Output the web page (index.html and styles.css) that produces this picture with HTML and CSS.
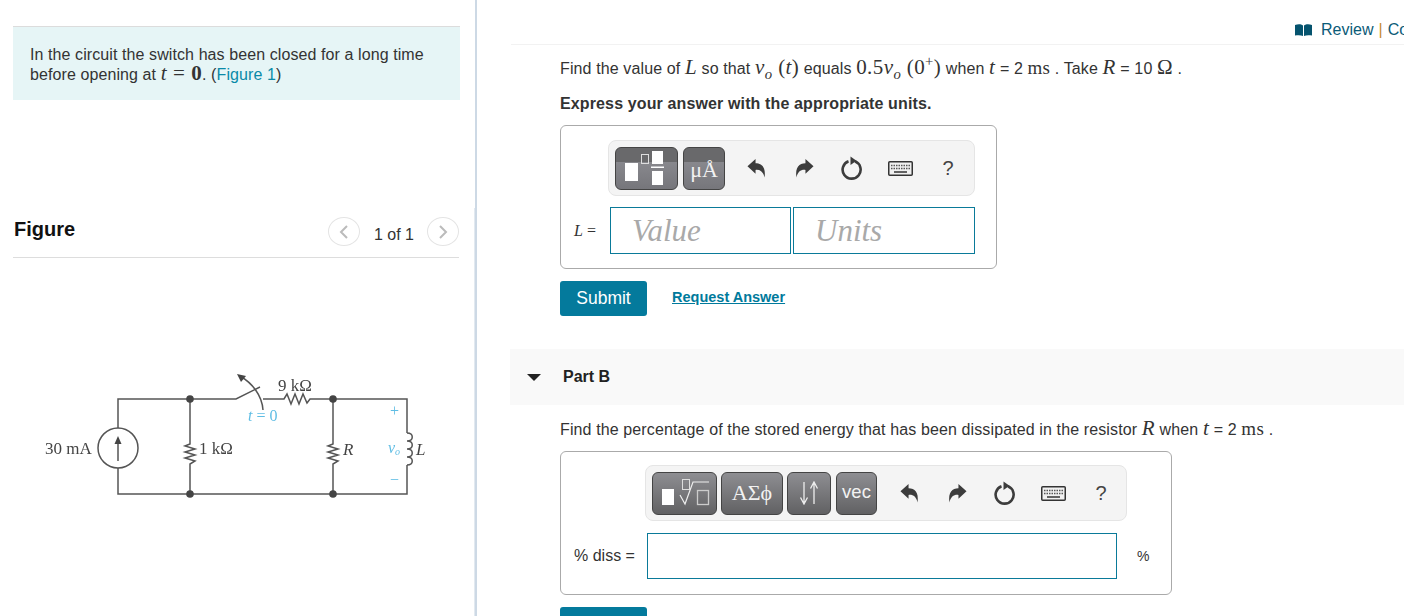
FILE: index.html
```html
<!DOCTYPE html>
<html>
  <head>
    <title>Part A</title>
    <link rel="stylesheet" href="styles.css">
  </head>
  <body>
    <svg class="defs" width="0" height="0">
      <symbol id="undo" viewBox="0 0 20 20">
        <path d="M0.500 7.500 L9 0 V4.500 C15.500 4.500 20 8.500 18.500 19.500 C17 13.500 14 11 9 11.500 V15.500 Z" fill="#3c3c3c"/>
      </symbol>
      <symbol id="redo" viewBox="0 0 20 20">
        <path d="M19.500 7.500 L11 0 V4.500 C4.500 4.500 0 8.500 1.500 19.500 C3 13.500 6 11 11 11.500 V15.500 Z" fill="#3c3c3c"/>
      </symbol>
      <symbol id="reset" viewBox="0 0 24 24">
        <path d="M15 5.300 A9 9 0 1 1 8.500 5.200" fill="none" stroke="#3c3c3c" stroke-width="2.600"/>
        <path d="M10.500 0.500 L16.500 4.800 L10.500 9 Z" fill="#3c3c3c"/>
      </symbol>
      <symbol id="keys" viewBox="0 0 25 15">
        <rect x="0.750" y="0.750" width="23.500" height="13.500" rx="1" fill="#f0f0f0" stroke="#333" stroke-width="1.500"/>
        <path d="M3 4.500 H22 M3 7.500 H22" stroke="#555" stroke-width="1.500" stroke-dasharray="1.500 1"/>
        <path d="M6 11 H19" stroke="#333" stroke-width="1.500"/>
      </symbol>
    </svg>

    <div class="page">
      <div class="left">
        <div class="intro">
          In the circuit the switch has been closed for a long time before opening at
          <span class="math big"><i>t</i><span class="eq">=</span><b>0</b></span>. (<a class="link" href="#">Figure 1</a>)
        </div>

        <div class="figureHead">
          <h2>Figure</h2>
          <div class="pager">
            <span class="pagerBtn">
              <svg width="10" height="14" viewBox="0 0 10 14"><path d="M8 1 L2 7 L8 13" fill="none" stroke="#bbb" stroke-width="2"/></svg>
            </span>
            <span class="pagerText">1 of 1</span>
            <span class="pagerBtn">
              <svg width="10" height="14" viewBox="0 0 10 14"><path d="M2 1 L8 7 L2 13" fill="none" stroke="#bbb" stroke-width="2"/></svg>
            </span>
          </div>
        </div>

        <!-- circuit, drawn in page coordinates -->
        <svg class="circuit" width="410" height="140" viewBox="30 365 410 140">
          <g fill="none" stroke="#555" stroke-width="1.500">
            <path d="M118 428 V399 H236 L260 387"/>
            <path d="M118 468 V494 H407 V465"/>
            <path d="M263 399 H284 L287 394 L291 404 L295 394 L299 404 L303 394 L307 403 L310 399 H407 V433"/>
            <path d="M190 399 V444 L185 446 L195 449 L185 452 L195 455 L185 458 L195 461 L190 464 V494"/>
            <path d="M333 399 V444 L328 446 L338 449 L328 452 L338 455 L328 458 L338 461 L333 464 V494"/>
            <circle cx="118" cy="448" r="20"/>
            <path d="M118 461 V440"/>
            <path d="M407 433 C414 433 414 441 407 441 C414 441 414 449 407 449 C414 449 414 457 407 457 C414 457 414 465 407 465"/>
            <path d="M263 410 C262 395 252 383 240 376"/>
          </g>
          <path d="M118 436 L114.500 444 H121.500 Z" fill="#444"/>
          <path d="M237 374 L246 376 L241 382 Z" fill="#444"/>
          <g fill="#444">
            <circle cx="190" cy="399" r="3.800"/>
            <circle cx="333" cy="399" r="3.800"/>
            <circle cx="190" cy="494" r="3.800"/>
            <circle cx="333" cy="494" r="3.800"/>
          </g>
          <g class="circuitLabel">
            <text x="45" y="454">30 mA</text>
            <text x="278" y="391">9 kΩ</text>
            <text x="199" y="454">1 kΩ</text>
            <text x="343" y="455" font-style="italic">R</text>
            <text x="416" y="455" font-style="italic">L</text>
          </g>
          <g class="circuitBlue">
            <text x="248" y="421"><tspan font-style="italic">t</tspan> = 0</text>
            <text x="388" y="453" font-style="italic">v<tspan font-size="10" dy="2">o</tspan></text>
            <text x="390" y="416">+</text>
            <text x="390" y="485">−</text>
          </g>
        </svg>
      </div>

      <div class="right">
        <div class="topBar">
          <svg width="17" height="12" viewBox="0 0 17 12"><path d="M0 1 C3 0 6 0 8 1.500 V12 C6 11 3 11 0 11.500 Z M9 1.500 C11 0 14 0 17 1 V11.500 C14 11 11 11 9 12 Z" fill="#05536e"/></svg>
          <a class="reviewLink" href="#">Review</a>
          <span class="sep">|</span>
          <a class="reviewLink" href="#">Course Home</a>
        </div>

        <div class="partBody">
          <p class="question">
            Find the value of <span class="math big"><i>L</i></span> so that
            <span class="math big"><i>v<sub>o</sub></i> (<i>t</i>)</span> equals
            <span class="math big">0.5<i>v<sub>o</sub></i> (0<sup>+</sup>)</span> when
            <span class="math big"><i>t</i></span> = 2 <span class="math">ms</span> . Take
            <span class="math big"><i>R</i></span> = 10 <span class="math big">Ω</span> .
          </p>
          <p class="hint">Express your answer with the appropriate units.</p>

          <div class="answerBox boxA">
            <div class="toolbar toolbarA">
              <span class="tool toolBand toolTemplates">
                <svg width="49" height="36" viewBox="0 0 49 36">
                  <rect x="3" y="13" width="13" height="18" fill="#fff"/>
                  <rect x="19.500" y="4.500" width="7" height="9" fill="none" stroke="#ddd"/>
                  <rect x="30" y="1" width="11" height="13" fill="#fff"/>
                  <rect x="29" y="16.500" width="13" height="1.500" fill="#fff"/>
                  <rect x="30" y="21" width="11" height="14" fill="#fff"/>
                </svg>
              </span>
              <span class="tool toolBand toolUnits">μÅ</span>
              <div class="toolIcons">
                <span class="iconCell"><svg width="19" height="19"><use href="#undo"/></svg></span>
                <span class="iconCell"><svg width="19" height="19"><use href="#redo"/></svg></span>
                <span class="iconCell"><svg width="24" height="24"><use href="#reset"/></svg></span>
                <span class="iconCell"><svg width="25" height="15"><use href="#keys"/></svg></span>
                <span class="iconCell help">?</span>
              </div>
            </div>
            <div class="inputRow">
              <span class="varLabel"><i>L</i> =</span>
              <div class="field fieldValue">Value</div>
              <div class="field fieldUnits">Units</div>
            </div>
          </div>

          <div class="actions">
            <button class="submit" type="button">Submit</button>
            <a class="requestLink" href="#">Request Answer</a>
          </div>
        </div>

        <div class="partHead">
          <svg width="14" height="7" viewBox="0 0 14 7"><path d="M0 0 H14 L7 7 Z" fill="#222"/></svg>
          <span>Part B</span>
        </div>

        <div class="partBody">
          <p class="question questionB">
            Find the percentage of the stored energy that has been dissipated in the resistor
            <span class="math big"><i>R</i></span> when <span class="math big"><i>t</i></span> = 2
            <span class="math">ms</span> .
          </p>

          <div class="answerBox boxB">
            <div class="toolbar toolbarB">
              <span class="tool toolFade toolRoot">
                <svg width="57" height="36" viewBox="0 0 57 36">
                  <rect x="6" y="14" width="12" height="16" fill="#fff"/>
                  <rect x="26.500" y="4.500" width="7" height="10" fill="none" stroke="#ddd"/>
                  <path d="M24 20 L29 29 L37 7 H53" fill="none" stroke="#eee" stroke-width="1.200"/>
                  <rect x="41.500" y="15.500" width="11" height="14" fill="none" stroke="#ccc" stroke-width="1.300"/>
                </svg>
              </span>
              <span class="tool toolFade toolGreek">ΑΣϕ</span>
              <span class="tool toolFade toolArrows">
                <svg width="22" height="24" viewBox="0 0 22 24">
                  <path d="M6 1 V22 M2.500 16.500 L6 23 L9.500 16.500 M16 23 V2 M12.500 7.500 L16 1 L19.500 7.500" fill="none" stroke="#eee" stroke-width="1.300"/>
                </svg>
              </span>
              <span class="tool toolFade toolVec">vec</span>
              <div class="toolIcons toolIconsB">
                <span class="iconCell"><svg width="19" height="19"><use href="#undo"/></svg></span>
                <span class="iconCell"><svg width="19" height="19"><use href="#redo"/></svg></span>
                <span class="iconCell"><svg width="24" height="24"><use href="#reset"/></svg></span>
                <span class="iconCell"><svg width="25" height="15"><use href="#keys"/></svg></span>
                <span class="iconCell help">?</span>
              </div>
            </div>
            <div class="inputRow inputRowB">
              <span class="dissLabel">% diss =</span>
              <div class="field fieldDiss"></div>
              <span class="percent">%</span>
            </div>
          </div>

          <button class="submit" type="button"></button>
        </div>
      </div>
    </div>
  </body>
</html>
```

FILE: styles.css
```css
html, body {
  margin: 0;
  height: 616px;
  overflow: hidden;
}
body {
  background-color: #fff;
  color: #333;
  font-family: 'Liberation Sans', Arial, sans-serif;
  font-size: 16px;
}

.defs {
  display: block;
  height: 0;
}

.page {
  display: flex;
  height: 616px;
}

a {
  text-decoration: none;
}
.link {
  color: #0a8aa8;
}

.math {
  font-family: 'Liberation Serif', 'DejaVu Serif', serif;
  font-size: 19px;
  line-height: 0;
  letter-spacing: 0.3px;
}
.math.big {
  font-size: 21px;
  letter-spacing: 0.4px;
}
.eq {
  margin: 0 6px;
}
sub, sup {
  font-size: 0.7em;
  line-height: 0;
}

/* left column */
.left {
  position: relative;
  flex: none;
  box-sizing: border-box;
  width: 477px;
  height: 616px;
  padding: 26px 0 0 13px;
  border-right: 2px solid #cdd9e5;
}
.left::after {
  content: "";
  position: absolute;
  top: 208px;
  right: 0;
  bottom: 0;
  width: 1px;
  background-color: #e2e9f0;
}
.intro {
  box-sizing: border-box;
  width: 447px;
  height: 74px;
  padding: 18px 16px 0 17px;
  background-color: #e6f5f6;
  border-top: 1px solid #dcdcdc;
  line-height: 20px;
  letter-spacing: 0.09px;
}
.figureHead {
  display: flex;
  justify-content: space-between;
  align-items: center;
  width: 446px;
  height: 43px;
  margin-top: 114px;
  border-bottom: 1px solid #ddd;
}
.figureHead h2 {
  margin: 0 0 12px 1px;
  color: #111;
  font-size: 20px;
}
.pager {
  display: flex;
  align-items: center;
  margin-bottom: 8px;
}
.pagerBtn {
  display: flex;
  align-items: center;
  justify-content: center;
  box-sizing: border-box;
  width: 32px;
  height: 29px;
  border: 1px solid #e4e4e4;
  border-radius: 50%;
}
.pagerText {
  margin: 7px 13px 0 14px;
}
.circuit {
  display: block;
  margin: 107px 0 0 17px;
  filter: blur(0.4px);
}
.circuitLabel {
  fill: #444;
  font-family: 'Liberation Serif', serif;
  font-size: 17px;
}
.circuitBlue {
  fill: #5fbde4;
  font-family: 'Liberation Serif', serif;
  font-size: 16px;
}

/* right column */
.right {
  flex: 1;
  min-width: 0;
  overflow: hidden;
}
.topBar {
  display: flex;
  align-items: center;
  box-sizing: border-box;
  height: 45px;
  margin-left: 34px;
  padding: 22px 0 7px 784px;
  border-bottom: 1px solid #f2f2f2;
  white-space: nowrap;
}
.reviewLink {
  color: #0b5b78;
}
.topBar svg {
  flex: none;
  margin-right: 9px;
}
.sep {
  margin: 0 5px;
  color: #c68a2e;
}

.partBody {
  padding-left: 83px;
}
.question {
  margin: 12px 0 0;
  line-height: 24px;
  letter-spacing: 0.12px;
  white-space: nowrap;
}
.questionB {
  margin-top: 13px;
}
.hint {
  margin: 13px 0 0;
  font-weight: bold;
  line-height: 20px;
  letter-spacing: 0.13px;
}

.answerBox {
  box-sizing: border-box;
  border: 1px solid #aaa;
  border-radius: 6px;
  background-color: #fff;
}
.boxA {
  width: 437px;
  height: 144px;
  margin-top: 11px;
  padding: 14px 21px 0 13px;
}
.boxB {
  width: 612px;
  height: 144px;
  margin-top: 9px;
  padding: 13px 13px 0 13px;
}

.toolbar {
  display: flex;
  align-items: center;
  box-sizing: border-box;
  height: 56px;
  padding: 0 6px;
  background-color: #f4f4f4;
  border: 1px solid #e5e5e5;
  border-radius: 8px;
}
.toolbarA {
  width: 367px;
  margin-left: 34px;
  gap: 5px;
}
.toolbarB {
  width: 482px;
  margin-left: 71px;
  gap: 4px;
}
.tool {
  flex: none;
  display: flex;
  align-items: center;
  justify-content: center;
  box-sizing: border-box;
  height: 43px;
  border: 1px solid #444;
  border-radius: 6px;
  color: #f2f2f2;
  overflow: hidden;
}
.toolBand {
  background: linear-gradient(#69696b 0, #69696b 14px, #88888d 14px, #76767b 100%);
}
.toolFade {
  background: linear-gradient(#8e8e92, #616163);
}
.toolTemplates {
  width: 63px;
}
.toolUnits {
  width: 42px;
  padding-top: 4px;
  font-family: 'Liberation Serif', serif;
  font-size: 22px;
}
.toolRoot {
  width: 65px;
}
.toolGreek {
  width: 62px;
  font-family: 'Liberation Serif', serif;
  font-size: 22px;
}
.toolArrows {
  width: 44px;
}
.toolVec {
  width: 41px;
  margin-left: 1px;
  padding-bottom: 3px;
  font-size: 18.500px;
}
.toolIcons {
  flex: none;
  display: flex;
  align-items: center;
  margin-left: 2px;
}
.toolIconsB {
  margin-left: 4px;
}
.iconCell {
  display: flex;
  align-items: center;
  justify-content: center;
  width: 48px;
}
.help {
  color: #444;
  font-size: 20px;
}

.inputRow {
  display: flex;
  align-items: center;
  margin-top: 11px;
}
.varLabel {
  width: 36px;
  font-family: 'Liberation Serif', serif;
  font-size: 16px;
}
.field {
  flex: none;
  box-sizing: border-box;
  height: 47px;
  padding-left: 21px;
  border: 1px solid #0a7a99;
  color: #a9a9a9;
  font-family: 'Liberation Serif', serif;
  font-size: 31px;
  font-style: italic;
  line-height: 45px;
}
.fieldValue {
  width: 181px;
}
.fieldUnits {
  width: 182px;
  margin-left: 2px;
}
.inputRowB {
  margin-top: 12px;
}
.dissLabel {
  flex: none;
  width: 73px;
  white-space: nowrap;
}
.fieldDiss {
  width: 470px;
  height: 46px;
}
.percent {
  margin-left: 20px;
  font-size: 14px;
}

.actions {
  display: flex;
  align-items: center;
  gap: 25px;
  margin-top: 12px;
}
.submit {
  display: block;
  width: 87px;
  height: 35px;
  padding: 0;
  background-color: #047a9c;
  border: none;
  border-radius: 3px;
  color: #fff;
  font-family: inherit;
  font-size: 17.500px;
}
.boxB + .submit {
  margin-top: 12px;
}
.requestLink {
  margin-top: -3px;
  color: #007a9c;
  font-size: 14.500px;
  font-weight: bold;
  text-decoration: underline;
}

.partHead {
  display: flex;
  align-items: center;
  gap: 22px;
  height: 56px;
  margin: 33px 0 0 33px;
  padding-left: 17px;
  background-color: #f9f9f9;
  color: #222;
  font-weight: bold;
}
```
